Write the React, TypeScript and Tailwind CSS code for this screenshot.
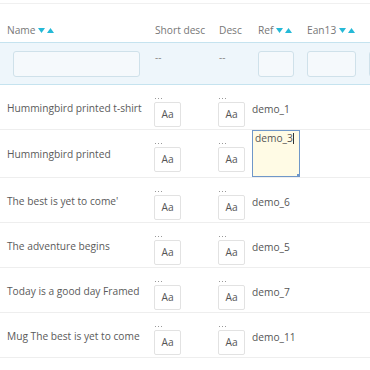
import React from "react";

const rows = [
  { name: "Hummingbird printed t-shirt", ref: "demo_1" },
  { name: "Hummingbird printed", ref: "demo_3", editing: true },
  { name: "The best is yet to come'", ref: "demo_6" },
  { name: "The adventure begins", ref: "demo_5" },
  { name: "Today is a good day Framed", ref: "demo_7" },
  { name: "Mug The best is yet to come", ref: "demo_11" },
];

function Sort() {
  return (
    <span className="ml-[3px] inline-flex items-center gap-[2px]">
      <svg width="7" height="5" viewBox="0 0 7 5"><path d="M0 0H7L3.5 5Z" fill="#25b9d7" /></svg>
      <svg width="7" height="5" viewBox="0 0 7 5"><path d="M0 5H7L3.5 0Z" fill="#25b9d7" /></svg>
    </span>
  );
}

function AaCell() {
  return (
    <div className="flex flex-col">
      <div className="flex h-[8px] items-center gap-[2px] pl-[1px]">
        <span className="h-[1px] w-[1px] bg-[#999]" />
        <span className="h-[1px] w-[1px] bg-[#999]" />
        <span className="h-[1px] w-[1px] bg-[#999]" />
      </div>
      <div className="flex h-[25px] w-[27px] items-center justify-center rounded-[2px] border border-[#e2e2e2] bg-white text-[10.2px] text-[#555]">
        Aa
      </div>
    </div>
  );
}

export default function App() {
  return (
    <div
      className="h-[370px] w-[370px] overflow-hidden bg-white text-[#555]"
      style={{ fontFamily: '"Open Sans", sans-serif' }}
    >
      <div className="h-[3px]" />
      <div className="border-t border-[#f0f0f0]" />
      {/* header */}
      <div className="flex h-[38px] items-end pb-[4px] text-[10.2px] text-[#777] whitespace-nowrap">
        <div className="flex w-[148px] shrink-0 items-center pl-[7px]">Name<Sort /></div>
        <div className="w-[64px] shrink-0 pl-[7px]">Short desc</div>
        <div className="w-[46px] shrink-0 pl-[7px]">Desc</div>
        <div className="flex w-[49px] shrink-0 items-center">Ref<Sort /></div>
        <div className="flex shrink-0 items-center">Ean13<Sort /></div>
      </div>
      {/* filter row */}
      <div className="flex h-[43px] items-center border-y border-[#c5e3ef] bg-[#eef6fb]">
        <div className="w-[148px] shrink-0 pl-[13px]">
          <div className="h-[26px] w-[127px] rounded-[3px] border border-[#cfe1ea] bg-[#f5f9fc]" />
        </div>
        <div className="w-[64px] shrink-0 pl-[7px] pb-[12px] text-[10px] text-[#888]">--</div>
        <div className="w-[46px] shrink-0 pl-[7px] pb-[12px] text-[10px] text-[#888]">--</div>
        <div className="w-[49px] shrink-0">
          <div className="h-[26px] w-[36px] rounded-[3px] border border-[#cfe1ea] bg-[#f5f9fc]" />
        </div>
        <div className="w-[62px] shrink-0">
          <div className="h-[26px] w-[49px] rounded-[3px] border border-[#cfe1ea] bg-[#f5f9fc]" />
        </div>
        <div className="shrink-0">
          <div className="h-[26px] w-[40px] rounded-[3px] border border-[#cfe1ea] bg-[#f5f9fc]" />
        </div>
      </div>
      {/* data rows */}
      {rows.map((r) => (
        <div
          key={r.ref}
          className={`flex border-b border-[#eeeeee] text-[10.2px] text-[#555] whitespace-nowrap ${r.editing ? "h-[48px]" : "h-[45px]"}`}
        >
          <div className="flex w-[148px] shrink-0 items-center pl-[7px] pt-[3px] text-[#5a5a5a]">{r.name}</div>
          <div className="w-[64px] shrink-0 pl-[6px] pt-[9px]">
            <AaCell />
          </div>
          <div className="w-[40px] shrink-0 pl-[6px] pt-[9px]">
            <AaCell />
          </div>
          {r.editing ? (
            <div className="relative h-[47px] w-[48px] shrink-0 border-[1.5px] border-[#6f97c9] bg-[#fffbe5] pl-[2px] text-[10.2px] leading-[14px]">
              demo_3<span className="inline-block h-[11px] w-px translate-y-[2px] bg-[#333]" />
              <div className="absolute bottom-[-1px] right-[-1px] h-[3px] w-[3px] bg-[#6f97c9]" />
            </div>
          ) : (
            <div className="pt-[17px]">{r.ref}</div>
          )}
        </div>
      ))}
    </div>
  );
}
